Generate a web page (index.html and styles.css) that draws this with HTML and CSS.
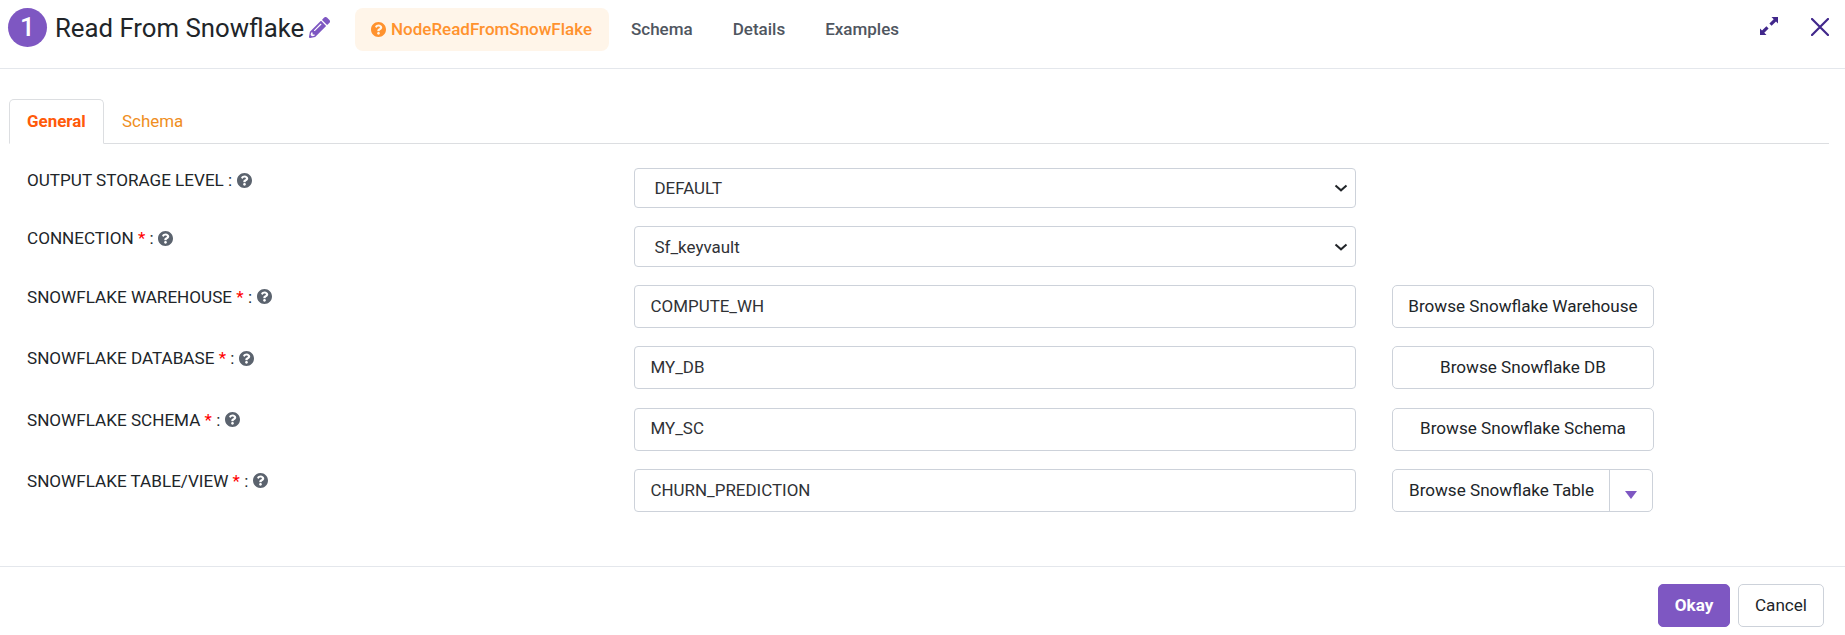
FILE: index.html
```html
<!DOCTYPE html>
<html lang="en">
<head>
<meta charset="utf-8">
<title>Read From Snowflake</title>
<link rel="stylesheet" href="styles.css">
</head>
<body>
<svg width="0" height="0" class="defs">
  <symbol id="help" viewBox="8 8 496 496"><path fill="currentColor" d="M504 256c0 137-111 248-248 248S8 393 8 256 119 8 256 8s248 111 248 248zM262.700 90c-54.500 0-89.300 23-116.500 63.800-3.500 5.300-2.400 12.400 2.700 16.300l34.700 26.300c5.200 3.900 12.600 3 16.700-2.100 17.900-22.700 30.100-35.800 57.300-35.800 20.400 0 45.700 13.100 45.700 33 0 15-12.400 22.700-32.500 34C247.100 238.500 216 254.900 216 296v4c0 6.600 5.400 12 12 12h56c6.600 0 12-5.400 12-12v-1.300c0-28.500 83.200-29.600 83.200-106.700 0-58-60.200-102-116.500-102zM256 338c-25.400 0-46 20.600-46 46s20.600 46 46 46 46-20.600 46-46-20.600-46-46-46z"/></symbol>
</svg>
<header class="header">
  <span class="step">1</span>
  <h1 class="title">Read From Snowflake</h1>
  <svg class="pencil" viewBox="0 0 512 512"><path fill="currentColor" d="M498 142l-46 46c-5 5-13 5-17 0L324 77c-5-5-5-12 0-17l46-46c19-19 49-19 68 0l60 60c19 19 19 49 0 68zm-214-42L22 362 0 484c-3 16 12 30 28 28l122-22 262-262c5-5 5-13 0-17L301 100c-4-5-12-5-17 0zM124 340c-5-6-5-14 0-20l154-154c6-5 14-5 20 0s5 14 0 20L144 340c-6 5-14 5-20 0zm-36 84h48v36l-64 12-32-32 12-65h36v49z"/></svg>
  <nav class="nav">
    <a class="nav-item nav-active"><svg class="help"><use href="#help"/></svg>NodeReadFromSnowFlake</a>
    <a class="nav-item">Schema</a>
    <a class="nav-item">Details</a>
    <a class="nav-item">Examples</a>
  </nav>
  <div class="window-actions">
    <svg class="expand" viewBox="0 0 18 18"><g fill="currentColor"><path d="M11.500 0H18v6.500l-2-2-4.400 4.300-2.200-2.200 4.300-4.400z"/><path d="M6.500 18H0v-6.500l2 2 4.400-4.300 2.200 2.200-4.300 4.400z"/></g></svg>
    <svg class="close" viewBox="0 0 18 18"><path d="M1 1l16 16M17 1L1 17" fill="none" stroke="currentColor" stroke-width="2.200" stroke-linecap="round"/></svg>
  </div>
</header>
<main class="body">
  <div class="tabs">
    <a class="tab tab-active">General</a>
    <a class="tab">Schema</a>
  </div>
  <form class="form">
    <div class="row select-row">
      <label class="label">OUTPUT STORAGE LEVEL : <svg class="help"><use href="#help"/></svg></label>
      <div class="control select">DEFAULT<svg class="chevron" viewBox="0 0 14 8"><path d="M1.500 1.500L7 6.300l5.500-4.800"/></svg></div>
    </div>
    <div class="row select-row">
      <label class="label">CONNECTION <b>*</b> : <svg class="help"><use href="#help"/></svg></label>
      <div class="control select">Sf_keyvault<svg class="chevron" viewBox="0 0 14 8"><path d="M1.500 1.500L7 6.300l5.500-4.800"/></svg></div>
    </div>
    <div class="row">
      <label class="label">SNOWFLAKE WAREHOUSE <b>*</b> : <svg class="help"><use href="#help"/></svg></label>
      <div class="control">COMPUTE_WH</div>
      <div class="button browse">Browse Snowflake Warehouse</div>
    </div>
    <div class="row">
      <label class="label">SNOWFLAKE DATABASE <b>*</b> : <svg class="help"><use href="#help"/></svg></label>
      <div class="control">MY_DB</div>
      <div class="button browse">Browse Snowflake DB</div>
    </div>
    <div class="row">
      <label class="label">SNOWFLAKE SCHEMA <b>*</b> : <svg class="help"><use href="#help"/></svg></label>
      <div class="control">MY_SC</div>
      <div class="button browse">Browse Snowflake Schema</div>
    </div>
    <div class="row">
      <label class="label">SNOWFLAKE TABLE/VIEW <b>*</b> : <svg class="help"><use href="#help"/></svg></label>
      <div class="control">CHURN_PREDICTION</div>
      <div class="button split"><span class="split-text">Browse Snowflake Table</span><span class="split-toggle"><i class="caret"></i></span></div>
    </div>
  </form>
</main>
<footer class="footer">
  <div class="button okay">Okay</div>
  <div class="button cancel">Cancel</div>
</footer>
</body>
</html>
```
FILE: styles.css
```css
* { box-sizing: border-box; }
body {
  margin: 0;
  height: 635px;
  display: flex;
  flex-direction: column;
  overflow: hidden;
  background: #fff;
  color: #212529;
  font: 16.950px/20px Roboto, sans-serif;
}
.defs { position: absolute; }
.header {
  display: flex;
  align-items: flex-start;
  height: 69px;
  padding: 8px 16px 0 8px;
  border-bottom: 1px solid #e4e7ec;
}
.step {
  width: 39px;
  height: 39px;
  border-radius: 50%;
  background: #7e57c2;
  color: #fff;
  font-size: 26px;
  font-weight: 500;
  line-height: 38px;
  text-align: center;
}
.title {
  width: 248px;
  margin: 0 0 0 8px;
  font-size: 25.750px;
  font-weight: 420;
  line-height: 40px;
  white-space: nowrap;
}
.pencil { width: 21px; height: 21px; margin: 9px 0 0 6px; color: #7e57c2; }
.nav { display: flex; margin-left: 25px; font-size: 17px; font-weight: 500; color: #4f5660; }
.nav-item { height: 43px; padding: 0 20px; line-height: 43px; white-space: nowrap; }
.nav-active {
  width: 254px;
  margin-right: 2px;
  padding: 0 16px;
  border-radius: 8px;
  background: #fff5e9;
  color: #ff922e;
}
.help { width: 15px; height: 15px; color: #5b636e; vertical-align: -1.500px; }
.nav-active .help { margin-right: 5px; color: inherit; }
.window-actions { display: flex; gap: 33px; margin-left: auto; color: #41278b; }
.expand { width: 18px; height: 18px; margin-top: 8.500px; }
.close { width: 18px; height: 18px; margin-top: 10px; }
.body { flex: 1; padding: 30px 16px 0 9px; }
.tabs { display: flex; height: 45px; border-bottom: 1px solid #dcdee1; }
.tab { height: 45px; padding: 0 18px; line-height: 45px; color: #ef8e22; }
.tab-active {
  width: 95px;
  padding: 0 17px;
  border: 1px solid #dcdee1;
  border-bottom-color: #fff;
  border-radius: 5px 5px 0 0;
  line-height: 43px;
  color: #ff5a0a;
  font-weight: 700;
}
.form { padding: 24px 0 0 18px; }
.row {
  display: grid;
  grid-template-columns: 607px 758px 262px;
  height: 43.200px;
  margin-bottom: 18.200px;
}
.select-row { height: 40.400px; margin-bottom: 18px; }
.label { font-weight: 450; font-size: 17.100px; line-height: 24px; white-space: nowrap; }
.label b { color: #f00; font-weight: 400; }
.label .help { margin-left: 0.500px; }
.control {
  display: flex;
  align-items: center;
  width: 722px;
  padding: 0 16px 1.500px 15.500px;
  border: 1px solid #cdd2da;
  border-radius: 4px;
  color: #303236;
}
.select { justify-content: space-between; padding: 0 7px 0 19.500px; }
.chevron { width: 14px; height: 8px; fill: none; stroke: #212529; stroke-width: 2; }
.button {
  display: flex;
  align-items: center;
  justify-content: center;
  padding-bottom: 1.500px;
  border: 1px solid #cdd2da;
  border-radius: 5px;
  font-size: 17.100px;
  font-weight: 450;
  white-space: nowrap;
}
.split { justify-content: flex-start; width: 261px; padding-bottom: 0; }
.split-text { width: 216px; padding: 0 0 1px 16px; }
.split-toggle {
  display: flex;
  flex: 1;
  align-self: stretch;
  justify-content: center;
  border-left: 1px solid #cdd2da;
}
.caret {
  width: 12px;
  height: 8px;
  margin-top: 21px;
  background: #7e57c2;
  clip-path: polygon(0 0, 100% 0, 50% 100%);
}
.footer {
  display: flex;
  justify-content: flex-end;
  gap: 8px;
  height: 69px;
  padding: 17px 21px 0;
  border-top: 1px solid #e4e7ec;
}
.footer .button { height: 43px; padding-bottom: 1px; }
.footer .okay { width: 72px; border-color: #7e57c2; background: #7e57c2; color: #fff; font-weight: 700; }
.cancel { width: 86px; }
```
